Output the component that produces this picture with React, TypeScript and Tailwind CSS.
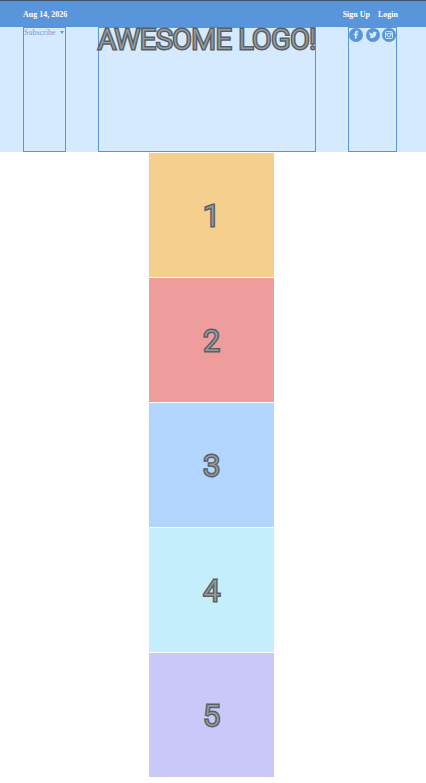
import React from "react";

const tiles = [
  { label: "1", color: "bg-[#f4cf8d]" },
  { label: "2", color: "bg-[#ef9c9d]" },
  { label: "3", color: "bg-[#b2d6ff]" },
  { label: "4", color: "bg-[#c4eefb]" },
  { label: "5", color: "bg-[#c9c8f9]" },
];

// Painting the fill over the stroke keeps a lighter line inside each letter.
const outlined =
  "font-['Roboto',sans-serif] font-light text-[#939b9e] [-webkit-text-stroke:3px_#5a5f63] [paint-order:stroke_fill]";

function SocialLink({ label, children }: { label: string; children: React.ReactNode }) {
  return (
    <a href="#" aria-label={label} className="block">
      <svg viewBox="0 0 26 26" className="size-[14px]" aria-hidden="true">
        <circle cx="13" cy="13" r="13" fill="#5995da" />
        {children}
      </svg>
    </a>
  );
}

export default function App() {
  return (
    <div className="min-h-screen bg-white font-['Liberation_Serif',serif]">
      <nav className="flex h-[27px] items-center justify-between border-t border-[#3c5068] bg-[#5995da] pt-px pr-7 pl-[23px] text-[8px] font-bold text-white">
        <time dateTime="2026-08-14">Aug 14, 2026</time>
        <div className="flex gap-2">
          <a href="#">Sign Up</a>
          <a href="#">Login</a>
        </div>
      </nav>

      <header className="flex h-[125px] justify-between bg-[#d5e9ff] pr-[29px] pl-[23px]">
        <div className="w-[43px] border border-[#5995da]">
          <button className="flex items-center gap-1 text-[8px] leading-[9px] whitespace-nowrap text-[#759bd5]">
            Subscribe
            <span className="border-x-2 border-t-[3px] border-x-transparent border-t-[#5995da]" />
          </button>
        </div>
        <div className="flex w-[218px] justify-center border border-[#5995da]">
          <h1 className={`${outlined} text-[28px] leading-6 whitespace-nowrap`}>AWESOME LOGO!</h1>
        </div>
        <div className="flex w-[49px] items-start justify-between border border-[#5995da]">
          <SocialLink label="Facebook">
            <path
              fill="#d5e9ff"
              d="M11 20v-6.500H9v-3h2V9c0-2.500 1.300-3.700 3.500-3.700H17v2.900h-1.500c-1 0-1.300.400-1.300 1.300v1h2.700l-.400 3h-2.300V20z"
            />
          </SocialLink>
          <SocialLink label="Twitter">
            <path
              fill="#d5e9ff"
              d="M20.500 8.200c-.500.300-1.100.400-1.700.500.600-.400 1.100-1 1.300-1.700-.600.400-1.200.600-1.900.800a3.100 3.100 0 0 0-5.300 2.800c-2.500-.100-4.800-1.300-6.300-3.200-.800 1.400-.400 3.200 1 4.100-.500 0-1-.200-1.400-.400 0 1.500 1 2.800 2.500 3.100-.500.100-.900.100-1.400 0 .400 1.300 1.600 2.100 2.900 2.200A6.200 6.200 0 0 1 5.600 17.700a8.800 8.800 0 0 0 13.400-7.900c.600-.400 1.100-1 1.500-1.600z"
            />
          </SocialLink>
          <SocialLink label="Instagram">
            <g fill="none" stroke="#d5e9ff" strokeWidth="1.800">
              <rect x="6.500" y="6.500" width="13" height="13" rx="2" />
              <circle cx="13" cy="13" r="3.300" />
              <path d="M6.500 11h3.500M16 11h3.500" />
            </g>
            <rect x="16" y="8" width="2.200" height="2.200" fill="#d5e9ff" />
          </SocialLink>
        </div>
      </header>

      <main className="flex flex-col items-center gap-px pt-px pr-[3px] pb-[5px]">
        {tiles.map(({ label, color }) => (
          <section key={label} className={`flex h-[124px] w-[125px] items-center justify-center pt-0.5 ${color}`}>
            <span className={`${outlined} text-[30px] leading-[34px]`}>{label}</span>
          </section>
        ))}
      </main>
    </div>
  );
}
